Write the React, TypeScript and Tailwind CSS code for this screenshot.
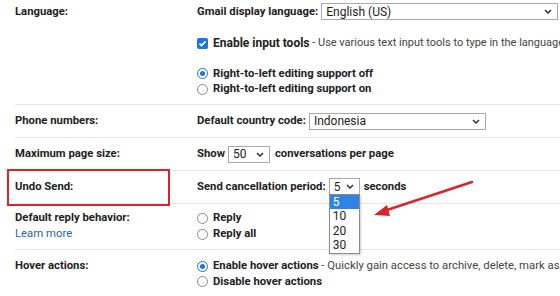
import React from "react";

function Chevron() {
  return (
    <svg width="8" height="5" viewBox="0 0 8 5" className="shrink-0">
      <path d="M1 1 L4 4 L7 1" fill="none" stroke="#333" strokeWidth="1.5" />
    </svg>
  );
}

function Select({ value, w, className = "" }: { value: string; w: string; className?: string }) {
  return (
    <div
      className={`inline-flex items-center justify-between h-[17px] border border-[#a9a9a9] bg-white pl-[4px] pr-[5px] font-normal text-[12px] text-[#222] ${w} ${className}`}
    >
      <span>{value}</span>
      <Chevron />
    </div>
  );
}

function Radio({ on }: { on?: boolean }) {
  return on ? (
    <span className="inline-flex items-center justify-center w-[11px] h-[11px] rounded-full border border-[#1a73e8] bg-white mr-[5px] shrink-0">
      <span className="w-[5px] h-[5px] rounded-full bg-[#1a73e8]" />
    </span>
  ) : (
    <span className="inline-block w-[11px] h-[11px] rounded-full border border-[#8a8a8a] bg-white mr-[5px] shrink-0" />
  );
}

function Checkbox() {
  return (
    <span className="inline-flex items-center justify-center w-[11px] h-[11px] rounded-[2px] bg-[#1a73e8] mr-[5px] shrink-0">
      <svg width="9" height="9" viewBox="0 0 9 9">
        <path d="M1.5 4.6 L3.6 6.6 L7.6 2.4" fill="none" stroke="#fff" strokeWidth="1.6" />
      </svg>
    </span>
  );
}

export default function App() {
  return (
    <div className="relative w-[560px] h-[296px] overflow-hidden bg-white font-['Roboto','Liberation_Sans',Arial,sans-serif] text-[11.3px] leading-[16px] text-[#222] whitespace-nowrap">
      {/* Language */}
      <div className="flex ml-[15px] border-b border-[#e6e6e6] pt-[3px] pb-[7px]">
        <div className="w-[182px] shrink-0 h-[17px] flex items-center font-bold">Language:</div>
        <div className="flex flex-col">
          <div className="flex items-center h-[17px]">
            <span className="font-bold">Gmail display language:</span>
            <Select value="English (US)" w="w-[237px]" className="ml-[3px]" />
            <span className="ml-[3px] text-[#777]">C</span>
          </div>
          <div className="flex items-center h-[16px] mt-[15px]">
            <Checkbox />
            <span className="font-bold text-[12px]">Enable input tools</span>
            <span className="text-[#444] text-[11px]">&nbsp;- Use various text input tools to type in the language</span>
          </div>
          <div className="flex items-center h-[15px] mt-[15px] font-bold">
            <Radio on />
            Right-to-left editing support off
          </div>
          <div className="flex items-center h-[16px] font-bold">
            <Radio />
            Right-to-left editing support on
          </div>
        </div>
      </div>

      {/* Phone numbers */}
      <div className="flex items-center ml-[15px] h-[33px] border-b border-[#e6e6e6]">
        <div className="w-[182px] shrink-0 font-bold">Phone numbers:</div>
        <div className="flex items-center">
          <span className="font-bold">Default country code:</span>
          <Select value="Indonesia" w="w-[177px]" className="ml-[3px]" />
        </div>
      </div>

      {/* Max page size */}
      <div className="flex items-center ml-[15px] h-[33px] border-b border-[#e6e6e6]">
        <div className="w-[182px] shrink-0 font-bold">Maximum page size:</div>
        <div className="flex items-center font-bold">
          <span>Show</span>
          <Select value="50" w="w-[42px]" className="ml-[3px]" />
          <span className="ml-[5px]">conversations per page</span>
        </div>
      </div>

      {/* Undo send */}
      <div className="flex items-center ml-[15px] h-[33px] border-b border-[#e6e6e6]">
        <div className="w-[182px] shrink-0 font-bold">Undo Send:</div>
        <div className="relative flex items-center font-bold">
          <span>Send cancellation period:</span>
          <div className="relative ml-[3px]">
            <Select value="5" w="w-[31px]" className="border-[#888]" />
            <div className="absolute left-0 top-[16px] w-[31px] border border-[#8a8a8a] bg-white font-normal text-[12px] text-[#222] shadow-[1px_1px_2px_rgba(0,0,0,0.2)] z-10">
              <div className="h-[14px] leading-[14px] pl-[3px] bg-[#2d84e6] text-white">5</div>
              <div className="h-[15px] leading-[15px] pl-[3px]">10</div>
              <div className="h-[14px] leading-[14px] pl-[3px]">20</div>
              <div className="h-[15px] leading-[15px] pl-[3px]">30</div>
            </div>
          </div>
          <span className="ml-[4px]">seconds</span>
        </div>
      </div>

      {/* Default reply */}
      <div className="flex ml-[15px] pt-[6px] pb-[7px] border-b border-[#e6e6e6]">
        <div className="w-[182px] shrink-0 flex flex-col">
          <span className="font-bold">Default reply behavior:</span>
          <span className="text-[#2e5fa8]">Learn more</span>
        </div>
        <div className="flex flex-col font-bold">
          <div className="flex items-center h-[16px]">
            <Radio />
            Reply
          </div>
          <div className="flex items-center h-[16px]">
            <Radio />
            Reply all
          </div>
        </div>
      </div>

      {/* Hover actions */}
      <div className="flex ml-[15px] pt-[8px]">
        <div className="w-[182px] shrink-0 font-bold">Hover actions:</div>
        <div className="flex flex-col">
          <div className="flex items-center h-[16px]">
            <Radio on />
            <span className="font-bold">Enable hover actions</span>
            <span className="text-[#444]">&nbsp;- Quickly gain access to archive, delete, mark as read, and snooze</span>
          </div>
          <div className="flex items-center h-[15px] font-bold">
            <Radio />
            Disable hover actions
          </div>
        </div>
      </div>

      {/* Annotations */}
      <div className="absolute left-[7px] top-[169px] w-[163px] h-[37px] border-2 border-[#d7262b]" />
      <svg className="absolute left-0 top-0 pointer-events-none" width="560" height="296">
        <line x1="472" y1="182" x2="384" y2="211" stroke="#d7262b" strokeWidth="2.5" strokeLinecap="round" />
        <polygon points="374,215 387,205 390,216" fill="#d7262b" />
      </svg>
    </div>
  );
}
